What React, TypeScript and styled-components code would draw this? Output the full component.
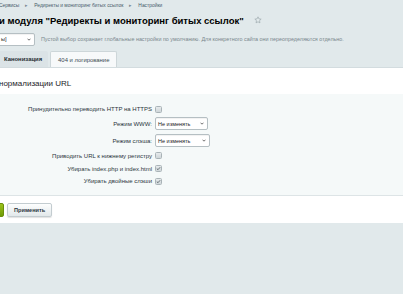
import React from 'react';
import styled, { createGlobalStyle } from 'styled-components';

const Global = createGlobalStyle`
  html, body { margin: 0; padding: 0; background: #e1e9eb; overflow: hidden; }
  body { font-family: "Liberation Sans", Arial, sans-serif; width: 403px; height: 294px; }
`;

const Page = styled.div`
  width: 403px;
  height: 294px;
  display: flex;
  flex-direction: column;
  overflow: hidden;
`;

const Breadcrumbs = styled.div`
  display: flex;
  align-items: center;
  gap: 6px;
  height: 10px;
  margin-left: -1px;
  font-size: 4.9px;
  color: #46596a;
  white-space: nowrap;
`;

const Arrow = styled.span`
  font-size: 4.6px;
  color: #7d8b95;
`;

const TitleRow = styled.div`
  display: flex;
  align-items: center;
  gap: 10px;
  height: 20px;
  margin-left: -1px;
`;

const Title = styled.h1`
  margin: 0;
  font-size: 9.5px;
  font-weight: bold;
  color: #000;
  white-space: nowrap;
`;

const SiteRow = styled.div`
  display: flex;
  align-items: center;
  gap: 6px;
  height: 16px;
  margin-top: 1px;
`;

const SelectBox = styled.div<{ $w: number }>`
  box-sizing: border-box;
  width: ${p => p.$w}px;
  height: 13px;
  display: flex;
  align-items: center;
  justify-content: space-between;
  padding: 0 3px 0 2px;
  background: #fff;
  border: 1px solid #b5bfc3;
  border-radius: 2px;
  font-size: 5.5px;
  color: #222;
  box-shadow: inset 0 1px 1px rgba(0,0,0,0.06);
`;

const SiteSelect = styled(SelectBox)`
  margin-left: -6px;
  padding-left: 6px;
`;

const Hint = styled.span`
  font-size: 5.4px;
  color: #7a878d;
  white-space: nowrap;
`;

const Tabs = styled.div`
  display: flex;
  align-items: flex-end;
  gap: 2px;
  height: 16px;
  margin-top: 4px;
`;

const Tab = styled.div<{ $active?: boolean }>`
  box-sizing: border-box;
  height: 16px;
  display: flex;
  align-items: center;
  font-size: 5.9px;
  white-space: nowrap;
  border-radius: 2px 2px 0 0;
  ${p => p.$active
    ? `background: #dbe3e6; color: #1e2a30; font-weight: bold; margin-left: -4px; padding: 0 6px 0 8px;`
    : `background: #f7f9fa; color: #3b4a52; border: 1px solid #cdd6d9; border-bottom: none; padding: 0 7px;`}
`;

const Panel = styled.div`
  display: flex;
  flex-direction: column;
  background: #fff;
  border-top: 1px solid #d3dcdf;
`;

const PanelHeader = styled.div`
  height: 26px;
  display: flex;
  align-items: center;
  padding-top: 5px;
  box-sizing: border-box;
  margin-left: -1px;
  font-size: 8px;
  color: #1c2429;
  white-space: nowrap;
`;

const Section = styled.div`
  background: #f5f9f9;
  padding: 9px 0 8px;
  display: grid;
  grid-template-columns: 152px 1fr;
  column-gap: 3px;
  border-bottom: 1px solid #dde4e6;
`;

const Label = styled.div<{ $h: number }>`
  height: ${p => p.$h}px;
  display: flex;
  align-items: center;
  justify-content: flex-end;
  font-size: 6px;
  color: #2b363c;
  white-space: nowrap;
`;

const Control = styled.div<{ $h: number }>`
  height: ${p => p.$h}px;
  display: flex;
  align-items: center;
`;

const Check = styled.span<{ $on?: boolean }>`
  box-sizing: border-box;
  width: 7px;
  height: 7px;
  border-radius: 1.5px;
  border: 1px solid #a9b3b7;
  background: linear-gradient(#e6eaec, #cfd6d9);
  display: flex;
  align-items: center;
  justify-content: center;
`;

const Footer = styled.div`
  height: 27px;
  display: flex;
  align-items: center;
  gap: 3px;
  padding-top: 1px;
  box-sizing: border-box;
`;

const SaveButton = styled.div`
  width: 20px;
  height: 14px;
  margin-left: -16px;
  border-radius: 2px;
  background: linear-gradient(#9cc31b, #6e9a05);
  border: 1px solid #6a8f0b;
  box-sizing: border-box;
`;

const Button = styled.div`
  box-sizing: border-box;
  height: 14px;
  display: flex;
  align-items: center;
  padding: 0 6px;
  border-radius: 2px;
  border: 1px solid #c3ccd0;
  background: linear-gradient(#fdfefe, #e2e8ea);
  box-shadow: 0 1px 1px rgba(0,0,0,0.12);
  font-size: 5.6px;
  font-weight: bold;
  color: #2b363c;
  white-space: nowrap;
`;

const Chevron = () => (
  <svg width="4" height="3" viewBox="0 0 4 3"><path d="M0.5 0.7 L2 2.2 L3.5 0.7" fill="none" stroke="#333" strokeWidth="0.7" /></svg>
);

const Tick = () => (
  <svg width="5" height="5" viewBox="0 0 5 5"><path d="M0.8 2.6 L2 3.7 L4.2 1.2" fill="none" stroke="#4d5a60" strokeWidth="0.8" /></svg>
);

const Star = () => (
  <svg width="8" height="8" viewBox="0 0 24 24"><path d="M12 2.5l2.9 6.2 6.6.7-5 4.6 1.4 6.6L12 17.3l-5.9 3.3 1.4-6.6-5-4.6 6.6-.7z" fill="none" stroke="#9aa6ab" strokeWidth="2" strokeLinejoin="round" /></svg>
);

type Row =
  | { label: string; kind: 'check'; on?: boolean; h: number }
  | { label: string; kind: 'select'; w: number; h: number };

const rows: Row[] = [
  { label: 'Принудительно переводить HTTP на HTTPS', kind: 'check', h: 12 },
  { label: 'Режим WWW:', kind: 'select', w: 53, h: 17 },
  { label: 'Режим слэша:', kind: 'select', w: 55, h: 17 },
  { label: 'Приводить URL к нижнему регистру', kind: 'check', h: 13 },
  { label: 'Убирать index.php и index.html', kind: 'check', on: true, h: 13 },
  { label: 'Убирать двойные слэши', kind: 'check', on: true, h: 12 },
];

export default function App() {
  return (
    <Page>
      <Global />
      <Breadcrumbs>
        <span>Сервисы</span>
        <Arrow>▸</Arrow>
        <span>Редиректы и мониторинг битых ссылок</span>
        <Arrow>▸</Arrow>
        <span>Настройки</span>
      </Breadcrumbs>
      <TitleRow>
        <Title>и модуля "Редиректы и мониторинг битых ссылок"</Title>
        <Star />
      </TitleRow>
      <SiteRow>
        <SiteSelect $w={41}><span>ы]</span><Chevron /></SiteSelect>
        <Hint>Пустой выбор сохранает глобальные настройки по умолчанию. Для конкретного сайта они переопределяются отдельно.</Hint>
      </SiteRow>
      <Tabs>
        <Tab $active>Канонизация</Tab>
        <Tab>404 и логирование</Tab>
      </Tabs>
      <Panel>
        <PanelHeader>нормализации URL</PanelHeader>
        <Section>
          {rows.map((r, i) => (
            <React.Fragment key={i}>
              <Label $h={r.h}>{r.label}</Label>
              <Control $h={r.h}>
                {r.kind === 'check'
                  ? <Check $on={r.on}>{r.on && <Tick />}</Check>
                  : <SelectBox $w={r.w}><span>Не изменять</span><Chevron /></SelectBox>}
              </Control>
            </React.Fragment>
          ))}
        </Section>
        <Footer>
          <SaveButton />
          <Button>Применить</Button>
        </Footer>
      </Panel>
    </Page>
  );
}
